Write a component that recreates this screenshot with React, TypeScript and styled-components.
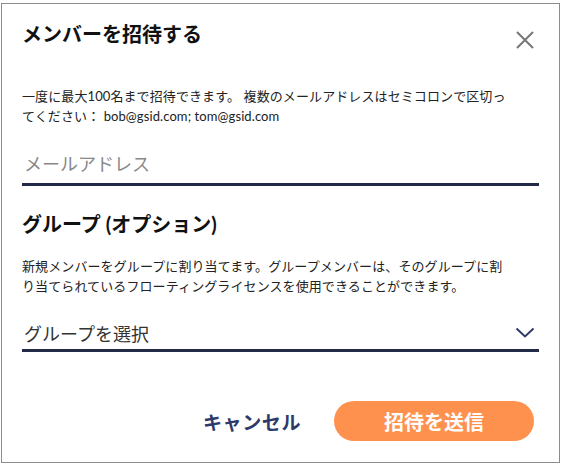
import React from "react";
import styled, { createGlobalStyle } from "styled-components";

const Global = createGlobalStyle`
  html, body { margin: 0; padding: 0; background: #fff; }
  body { font-family: Lato, "Noto Sans CJK JP", sans-serif; }
`;

const Dialog = styled.div`
  box-sizing: border-box;
  width: 559px;
  height: 460px;
  margin: 3px 0 0 1px;
  border: 1px solid #8c8c8c;
  background: #fff;
  padding: 0 20px 0 20px;
  display: flex;
  flex-direction: column;
`;

const Header = styled.div`
  display: flex;
  justify-content: space-between;
  align-items: center;
  padding-top: 15px;
  height: 30px;
`;

const Title = styled.h1`
  margin: 0;
  font-size: 20px;
  font-weight: 700;
  color: #111;
  line-height: 26px;
  font-family: Lato, "Noto Sans CJK JP", sans-serif;
`;

const CloseButton = styled.button`
  border: none;
  background: none;
  padding: 0;
  margin: 12px 3px 0 0;
  width: 22px;
  height: 22px;
  display: flex;
  align-items: center;
  justify-content: center;
  cursor: pointer;
`;

const Help = styled.p<{ $top: number }>`
  margin: ${(p) => p.$top}px 0 0 0;
  max-width: 486px;
  font-size: 13px;
  line-height: 20px;
  color: #222;
  letter-spacing: 0.1px;
`;

const Field = styled.div<{ $top: number; $inset: number }>`
  margin-top: ${(p) => p.$top}px;
  display: flex;
  align-items: flex-end;
  justify-content: space-between;
  height: 40px;
  box-sizing: border-box;
  border-bottom: 3px solid #232a45;
  padding: 0 2px ${(p) => p.$inset}px 2px;
`;

const Placeholder = styled.span<{ $muted?: boolean }>`
  font-size: 18px;
  color: ${(p) => (p.$muted ? "#888" : "#333")};
  line-height: 24px;
`;

const Chevron = styled.span`
  display: flex;
  margin: 0 2px 7px 0;
`;

const SectionTitle = styled.h2`
  margin: 25px 0 0 0;
  font-size: 20px;
  font-weight: 700;
  color: #111;
  line-height: 26px;
`;

const Footer = styled.div`
  margin-top: auto;
  margin-bottom: 21px;
  padding-right: 5px;
  display: flex;
  justify-content: flex-end;
  align-items: center;
  gap: 33px;
`;

const TextButton = styled.button`
  border: none;
  background: none;
  padding: 0;
  font-family: inherit;
  font-size: 19px;
  font-weight: 700;
  color: #2e3a6a;
  cursor: pointer;
  letter-spacing: 0.6px;
`;

const PrimaryButton = styled.button`
  border: none;
  width: 200px;
  height: 40px;
  border-radius: 20px;
  background: #ff914f;
  color: #fff;
  font-family: inherit;
  font-size: 20px;
  font-weight: 700;
  cursor: pointer;
`;

export default function App() {
  return (
    <>
      <Global />
      <Dialog>
        <Header>
          <Title>メンバーを招待する</Title>
          <CloseButton aria-label="閉じる">
            <svg width="20" height="20" viewBox="0 0 20 20">
              <path d="M2 2 L18 18 M18 2 L2 18" stroke="#777" strokeWidth="2" />
            </svg>
          </CloseButton>
        </Header>
        <Help $top={37}>
          一度に最大100名まで招待できます。 複数のメールアドレスはセミコロンで区切ってください： bob@gsid.com; tom@gsid.com
        </Help>
        <Field $top={20} $inset={7}>
          <Placeholder $muted>メールアドレス</Placeholder>
        </Field>
        <SectionTitle>グループ (オプション)</SectionTitle>
        <Help $top={19}>
          新規メンバーをグループに割り当てます。グループメンバーは、そのグループに割り当てられているフローティングライセンスを使用できることができます。
        </Help>
        <Field $top={16} $inset={3}>
          <Placeholder>グループを選択</Placeholder>
          <Chevron>
            <svg width="20" height="12" viewBox="0 0 20 12">
              <path d="M1.5 1.5 L10 9.5 L18.5 1.5" stroke="#2e3a6a" strokeWidth="2" fill="none" />
            </svg>
          </Chevron>
        </Field>
        <Footer>
          <TextButton>キャンセル</TextButton>
          <PrimaryButton>招待を送信</PrimaryButton>
        </Footer>
      </Dialog>
    </>
  );
}
